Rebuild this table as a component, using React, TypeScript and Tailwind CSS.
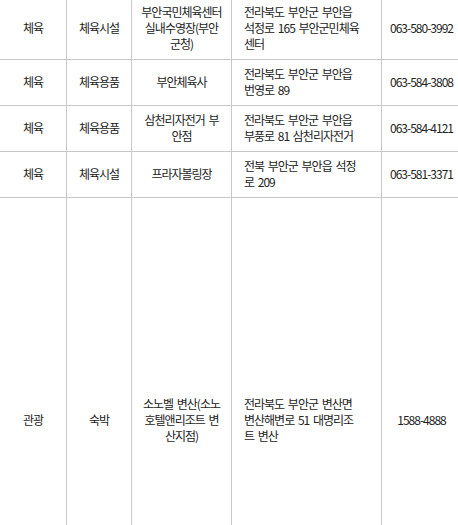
import React from "react";

interface Place {
  category: string;
  type: string;
  name: string;
  address: string;
  phone: string;
  tall?: boolean;
}

const places: Place[] = [
  {
    category: "체육",
    type: "체육시설",
    name: "부안국민체육센터 실내수영장(부안군청)",
    address: "전라북도 부안군 부안읍 석정로 165 부안군민체육센터",
    phone: "063-580-3992",
  },
  {
    category: "체육",
    type: "체육용품",
    name: "부안체육사",
    address: "전라북도 부안군 부안읍 번영로 89",
    phone: "063-584-3808",
  },
  {
    category: "체육",
    type: "체육용품",
    name: "삼천리자전거 부안점",
    address: "전라북도 부안군 부안읍 부풍로 81 삼천리자전거",
    phone: "063-584-4121",
  },
  {
    category: "체육",
    type: "체육시설",
    name: "프라자볼링장",
    address: "전북 부안군 부안읍 석정로 209",
    phone: "063-581-3371",
  },
  {
    category: "관광",
    type: "숙박",
    name: "소노벨 변산(소노호텔앤리조트 변산지점)",
    address: "전라북도 부안군 변산면 변산해변로 51 대명리조트 변산",
    phone: "1588-4888",
    tall: true,
  },
];

function Cell({
  children,
  align = "center",
  tall,
}: {
  children: React.ReactNode;
  align?: "center" | "left";
  tall?: boolean;
}) {
  return (
    <div
      className={`flex items-center border-r border-b border-[#c8c8c8] pt-[6px] pb-[7px] ${
        align === "center" ? "justify-center text-center px-2" : "justify-start text-left pl-[12px] pr-[18px]"
      } ${tall ? "h-[446px]" : ""}`}
    >
      <span>{children}</span>
    </div>
  );
}

export default function App() {
  return (
    <div className="w-[458px] h-[525px] overflow-hidden bg-white">
      <div
        className="-mt-[2px] grid w-[462px] grid-cols-[67px_65px_100px_150px_80px] text-[12px] leading-[16px] tracking-[-1px] [word-spacing:2px] text-[#222]"
        style={{ fontFamily: '"Noto Sans CJK KR", "Noto Sans", sans-serif' }}
      >
        {places.map((p) => (
          <React.Fragment key={p.phone}>
            <Cell tall={p.tall}>{p.category}</Cell>
            <Cell tall={p.tall}>{p.type}</Cell>
            <Cell tall={p.tall}>{p.name}</Cell>
            <Cell tall={p.tall} align="left">
              {p.address}
            </Cell>
            <Cell tall={p.tall}>{p.phone}</Cell>
          </React.Fragment>
        ))}
      </div>
    </div>
  );
}
